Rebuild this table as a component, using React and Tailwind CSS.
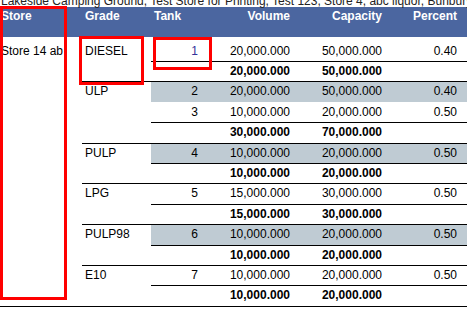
import React from "react";

const groups = [
  { grade: "DIESEL", rows: [{ tank: "1", volume: "20,000.000", capacity: "50,000.000", percent: "0.40", link: true }], total: ["20,000.000", "50,000.000"] },
  {
    grade: "ULP",
    rows: [
      { tank: "2", volume: "20,000.000", capacity: "50,000.000", percent: "0.40", shade: true },
      { tank: "3", volume: "10,000.000", capacity: "20,000.000", percent: "0.50" },
    ],
    total: ["30,000.000", "70,000.000"],
  },
  { grade: "PULP", rows: [{ tank: "4", volume: "10,000.000", capacity: "20,000.000", percent: "0.50", shade: true }], total: ["10,000.000", "20,000.000"] },
  { grade: "LPG", rows: [{ tank: "5", volume: "15,000.000", capacity: "30,000.000", percent: "0.50" }], total: ["15,000.000", "30,000.000"] },
  { grade: "PULP98", rows: [{ tank: "6", volume: "10,000.000", capacity: "20,000.000", percent: "0.50", shade: true }], total: ["10,000.000", "20,000.000"] },
  { grade: "E10", rows: [{ tank: "7", volume: "10,000.000", capacity: "20,000.000", percent: "0.50" }], total: ["10,000.000", "20,000.000"] },
];

const Cells = ({ tank, volume, capacity, percent, bold, link }) => (
  <>
    <div className={`w-[50px] pr-[3px] text-right ${link ? "text-[#33329a]" : ""}`}>{tank}</div>
    <div className={`w-[92px] pr-[3px] text-right ${bold ? "font-bold" : ""}`}>{volume}</div>
    <div className={`w-[92px] pr-[3px] text-right ${bold ? "font-bold" : ""}`}>{capacity}</div>
    <div className="flex-1 pr-[10px] text-right">{percent}</div>
  </>
);

export default function App() {
  return (
    <div className="relative w-[467px] h-[311px] overflow-hidden bg-white text-black text-[12px] leading-[14px] font-['Liberation_Sans',Arial,sans-serif]">
      <div className="-mt-[6px] h-[13px] pl-[1px] whitespace-nowrap text-[#222]">
        Lakeside Camping Ground, Test Store for Printing, Test 123, Store 4, abc liquor, Bunbury WA 6230
      </div>

      <div className="flex h-[30px] pt-[2px] bg-[#4b66a0] text-white font-bold">
        <div className="w-[82px] pl-[1px]">Store</div>
        <div className="w-[69px] pl-[3px]">Grade</div>
        <div className="w-[50px] pl-[3px]">Tank</div>
        <div className="w-[92px] pr-[3px] text-right">Volume</div>
        <div className="w-[92px] pr-[3px] text-right">Capacity</div>
        <div className="flex-1 pr-[10px] text-right">Percent</div>
      </div>

      <div className="flex border-b border-black">
        <div className="w-[82px] pl-[1px] pt-[7px]">Store 14 ab</div>
        <div className="flex-1">
          {groups.map((g, gi) => (
            <div key={g.grade} className={`flex ${gi ? "border-t border-black" : ""}`}>
              <div className={`w-[69px] pl-[3px] ${gi ? "pt-[2px]" : "pt-[7px]"}`}>{g.grade}</div>
              <div className="flex-1">
                {g.rows.map((r, ri) => (
                  <div
                    key={r.tank}
                    className={`flex ${r.shade ? "bg-[#bfcbd3]" : ""} ${
                      gi === 0 ? "h-[24px] pt-[7px]" : ri === 0 ? "h-[19.4px] pt-[2px]" : "h-[20.4px] pt-[3px]"
                    }`}
                  >
                    <Cells {...r} />
                  </div>
                ))}
                <div className="flex h-[20.4px] pt-[2px] border-t border-black">
                  <Cells tank="" volume={g.total[0]} capacity={g.total[1]} percent="" bold />
                </div>
              </div>
            </div>
          ))}
        </div>
      </div>

      <div className="absolute left-0 top-[6px] w-[67px] h-[294px] border-[3px] border-[#ff0000]" />
      <div className="absolute left-[79px] top-[36px] w-[65px] h-[49px] border-[3px] border-[#ff0000]" />
      <div className="absolute left-[153px] top-[37px] w-[59px] h-[33px] border-[3px] border-[#ff0000]" />
    </div>
  );
}
